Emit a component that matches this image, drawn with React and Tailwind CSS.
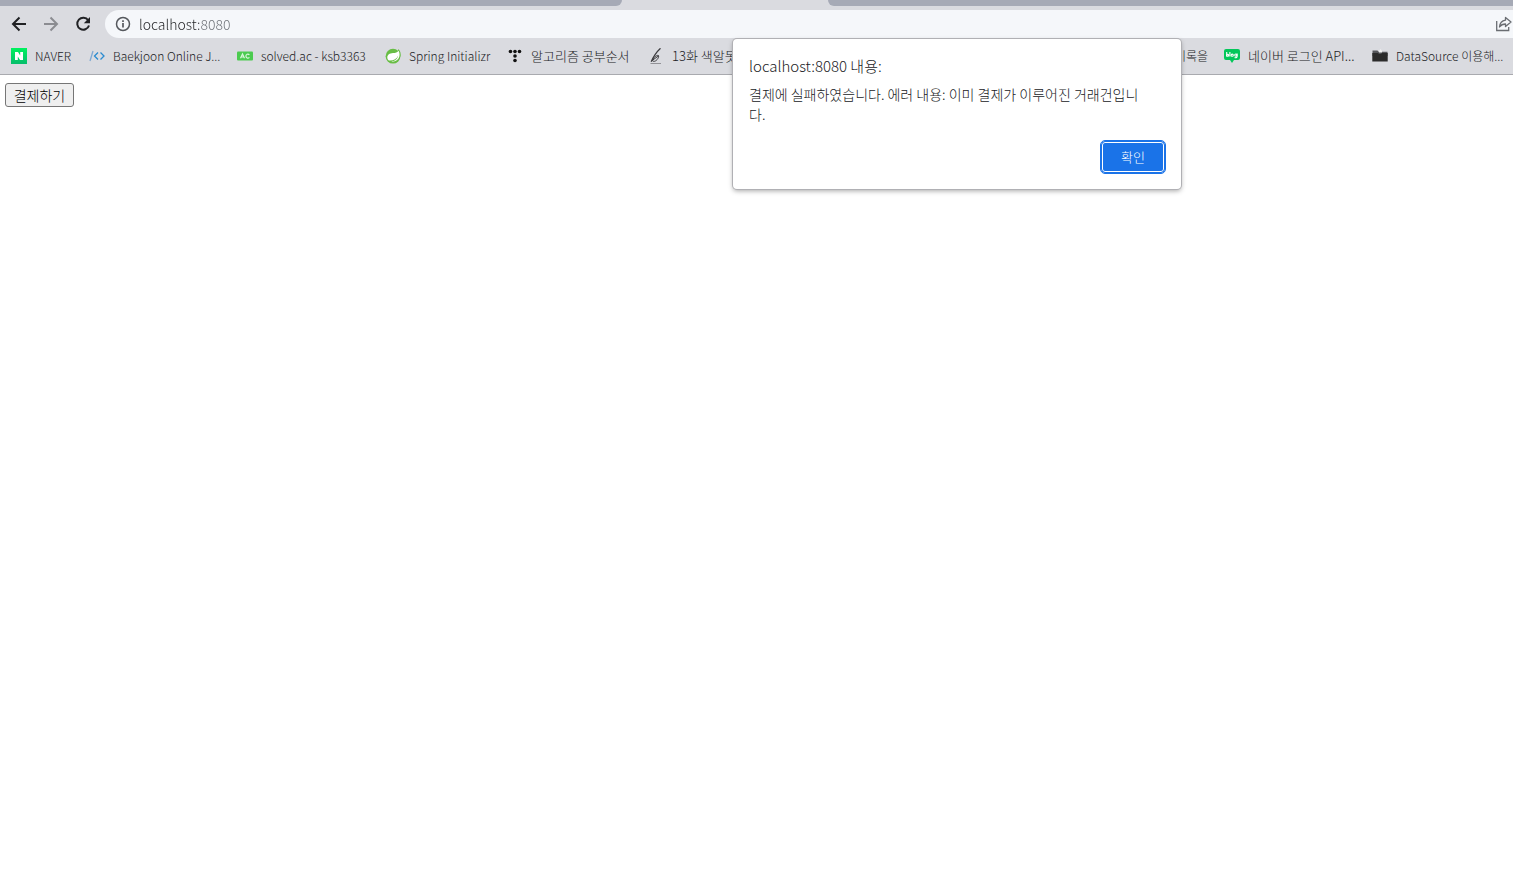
import { useState } from "react";

function NaverIcon() {
  return (
    <svg viewBox="0 0 16 16" className="size-4 shrink-0">
      <defs>
        <linearGradient id="naver" x1="0" y1="0" x2="0" y2="1">
          <stop offset="0" stopColor="#00f25e" />
          <stop offset="1" stopColor="#06bd6c" />
        </linearGradient>
      </defs>
      <rect width="16" height="16" fill="url(#naver)" />
      <path d="M4 4h3l2.2 3.4V4H12v8H9L6.8 8.6V12H4z" fill="#fff" />
    </svg>
  );
}

function BaekjoonIcon() {
  return (
    <svg viewBox="0 0 16 16" className="size-4 shrink-0" fill="none" strokeWidth="1.3">
      <path d="M1 13 4 3" stroke="#7fa9d2" />
      <path d="M9 4.5 5.5 8 9 11.5" stroke="#2b8bd0" />
      <path d="M11.5 4.5 15 8l-3.500 3.500" stroke="#2b8bd0" />
    </svg>
  );
}

function SolvedIcon() {
  return (
    <svg viewBox="0 0 16 16" className="size-4 shrink-0">
      <rect y="3.500" width="16" height="9" rx="1" fill="#4ccb50" />
      <path d="M3.500 10.300 5.500 5.900 7.500 10.300M4.300 9h2.400M12.400 6.900C11 5.400 8.900 6.300 8.900 8.100s2.100 2.700 3.500 1.200" fill="none" stroke="#d9f6da" strokeWidth="1.200" />
    </svg>
  );
}

function SpringIcon() {
  return (
    <svg viewBox="0 0 16 16" className="size-4 shrink-0">
      <circle cx="8" cy="8.200" r="7.400" fill="#68bd45" />
      <path d="M13.500 1C15.500 3 16 6 15.600 8.500L12 5z" fill="#68bd45" />
      <path d="M13.600 2.800C12.500 4.600 10.500 5 8 5.100 4.500 5.300 2.300 7 2.300 9.600c0 1.400.6 2.300 1.600 2.900 4.700.3 7.700-1.300 9.300-4.900-.8 3.500-3.500 5.800-7 6 4 .4 7.200-1.600 8.100-4.900.6-2.200.1-4.200-.7-5.900z" fill="#fff" />
    </svg>
  );
}

const tistoryDots = [[3.500, 3.500], [8, 3.500], [12.500, 3.500], [8, 8], [8, 12.500]];

function TistoryIcon() {
  return (
    <svg viewBox="0 0 16 16" className="size-4 shrink-0" fill="#111">
      {tistoryDots.map(([x, y]) => (
        <circle key={`${x}-${y}`} cx={x} cy={y} r="1.800" />
      ))}
    </svg>
  );
}

function PenIcon() {
  return (
    <svg viewBox="0 0 16 16" className="size-4 shrink-0" fill="none" stroke="#3c3c3f">
      <path d="M12.500.3C8.500 4 5.500 8.500 3.200 13.800" strokeWidth="1.300" />
      <path d="M4.800 11.500C6.500 8.500 9.200 6.800 10.300 7.600c1.200 1.100-1.300 5.200-3.800 5.700-1.200.2-1.900-.3-2.300-.9l6.800-4.800" />
      <path d="M2.500 15.500H13" stroke="#929297" />
    </svg>
  );
}

function BlogIcon() {
  return (
    <svg viewBox="0 0 16 16" className="size-4 shrink-0">
      <path d="M2 1h12a2 2 0 0 1 2 2v7a2 2 0 0 1-2 2h-4l-2 3-2-3H2a2 2 0 0 1-2-2V3a2 2 0 0 1 2-2z" fill="#03c75a" />
      <g fill="none" stroke="#fff" strokeWidth="1.100">
        <path d="M2.700 4v4.500M5.900 4v4.500" />
        <circle cx="3.700" cy="7.200" r="1" />
        <circle cx="8.200" cy="7.200" r="1.100" />
        <circle cx="11.800" cy="7.100" r="1.100" />
        <path d="M13.100 5.600v3c0 1-1.500 1.400-2.500.9" />
      </g>
    </svg>
  );
}

function FolderIcon() {
  return (
    <svg viewBox="0 0 16 16" className="size-4 shrink-0">
      <path d="M.5 2.500h5l1 1.300h9V8H.5z" fill="#55565a" />
      <path d="M7 3 8.500 1 10 3v1.500H7z" fill="#f1f1f1" />
      <path d="M.3 5H6l1 1h2l1-1h5.700v8.500H.3z" fill="#2b2b2b" />
    </svg>
  );
}

const leftBookmarks = [
  { title: "NAVER", Icon: NaverIcon, className: "w-[62px]" },
  { title: "Baekjoon Online J...", Icon: BaekjoonIcon, className: "w-[132px]" },
  { title: "solved.ac - ksb3363", Icon: SolvedIcon, className: "w-[132px]" },
  { title: "Spring Initializr", Icon: SpringIcon, className: "w-[106px]" },
  { title: "알고리즘 공부순서", Icon: TistoryIcon, className: "w-[125px] text-[13px]" },
  { title: "13화 색알못", Icon: PenIcon, className: "w-[132px] text-[13px]" },
];

const rightBookmarks = [
  { title: "기록을", className: "w-auto" },
  { title: "네이버 로그인 API...", Icon: BlogIcon, className: "w-[132px] text-[13px]" },
  { title: "DataSource 이용해...", Icon: FolderIcon, className: "w-[135px]" },
];

function Bookmark({ title, Icon, className }) {
  return (
    <a href="#" className={`flex shrink-0 items-center gap-2 whitespace-nowrap ${className}`}>
      {Icon && <Icon />}
      <span>{title}</span>
    </a>
  );
}

function TabStrip() {
  return (
    <div className="flex h-1.5">
      <div className="w-[622px] rounded-br-md bg-[#a6aab6]" />
      <div className="w-[206px]" />
      <div className="flex-1 rounded-bl-md bg-[#a6aab6]" />
    </div>
  );
}

function Toolbar() {
  return (
    <div className="flex h-8 items-center pt-1">
      <div className="flex gap-4 pr-3.5 pl-[11px]">
        <button aria-label="Back" className="size-4">
          <svg viewBox="0 0 16 16" fill="none" stroke="#202124" strokeWidth="2">
            <path d="M15 8H2M8.500 1.500 2 8l6.500 6.500" />
          </svg>
        </button>
        <button aria-label="Forward" className="size-4">
          <svg viewBox="0 0 16 16" fill="none" stroke="#8b8c91" strokeWidth="2">
            <path d="M1 8h13M7.500 1.500 14 8l-6.500 6.500" />
          </svg>
        </button>
        <button aria-label="Reload" className="size-4">
          <svg viewBox="0 0 16 16" fill="none" stroke="#202124" strokeWidth="2">
            <path d="M13.200 4.300A6 6 0 1 0 14 9.500" />
            <path d="M15 1v6.200H8.800z" fill="#202124" stroke="none" />
          </svg>
        </button>
      </div>
      <div className="flex h-7 flex-1 items-center gap-2 rounded-l-full bg-[#f5f7fa] pl-2.5">
        <svg viewBox="0 0 16 16" className="size-4" fill="none" stroke="#55585d" strokeWidth="1.500">
          <circle cx="8" cy="8" r="6.500" />
          <path d="M8 7v4.500M8 4.300v1.600" strokeWidth="1.700" />
        </svg>
        <input
          aria-label="Address"
          defaultValue="localhost:8080"
          className="min-w-0 flex-1 bg-[linear-gradient(to_right,#202124_60px,#6b6f75_60px)] bg-clip-text text-sm text-transparent outline-none"
        />
        <button aria-label="Share" className="size-[18px]">
          <svg viewBox="0 0 18 18" fill="none" stroke="#6a6d72" strokeWidth="1.300">
            <path d="M1.700 6v9.500h12V12" />
            <path d="M10.500 2.500 16 7l-5.500 4.500V9C8 9 6 9.800 4.500 12c.3-3.500 2.500-6.300 6-6.800z" strokeLinejoin="round" />
          </svg>
        </button>
      </div>
    </div>
  );
}

function AlertDialog({ onClose }) {
  return (
    <div
      role="alertdialog"
      aria-labelledby="alert-title"
      aria-describedby="alert-message"
      className="absolute top-[39px] left-[733px] w-[448px] rounded bg-white px-4 pt-[15px] pb-4 text-[#202124] shadow-[0_0_0_1px_#b0b0b4,0_2px_5px_rgba(0,0,0,0.35)]"
    >
      <h1 id="alert-title" className="text-[15px] leading-6">localhost:8080 내용:</h1>
      <p id="alert-message" className="mt-1.5 max-w-[402px] text-sm leading-5">
        결제에 실패하였습니다. 에러 내용: 이미 결제가 이루어진 거래건입니다.
      </p>
      <div className="mt-[17px] flex justify-end">
        <button
          onClick={onClose}
          className="h-8 w-16 rounded border border-[#1a73e8] bg-[#1a73e8] text-[13px] text-white inset-ring inset-ring-white outline outline-[#1a73e8]"
        >
          확인
        </button>
      </div>
    </div>
  );
}

function App() {
  const [open, setOpen] = useState(true);

  return (
    <div className="relative min-h-screen overflow-hidden bg-white font-['Noto_Sans_CJK_KR',sans-serif] font-light">
      <header className="border-b border-[#a9aaaf] bg-[#dadbe0]">
        <TabStrip />
        <Toolbar />
        <nav className="flex h-9 items-center justify-between pl-[11px] text-xs text-[#202124]">
          <div className="flex gap-4">
            {leftBookmarks.map((b) => (
              <Bookmark key={b.title} {...b} />
            ))}
          </div>
          <div className="flex gap-4 pr-1.5">
            {rightBookmarks.map((b) => (
              <Bookmark key={b.title} {...b} />
            ))}
          </div>
        </nav>
      </header>
      <main className="px-[5px] py-2">
        <button
          onClick={() => setOpen(true)}
          className="block h-6 w-[69px] rounded-[3px] border border-[#767676] bg-[#efefef] text-sm whitespace-nowrap text-black"
        >
          결제하기
        </button>
      </main>
      {open && <AlertDialog onClose={() => setOpen(false)} />}
    </div>
  );
}

export default App;
